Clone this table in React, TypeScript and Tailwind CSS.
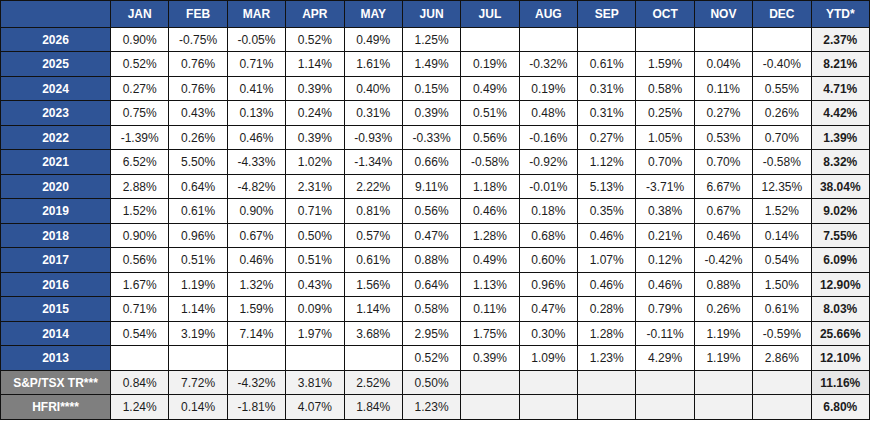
import React from 'react';

const months = ['JAN', 'FEB', 'MAR', 'APR', 'MAY', 'JUN', 'JUL', 'AUG', 'SEP', 'OCT', 'NOV', 'DEC'];

type Row = { label: string; values: (string | null)[]; ytd: string; bench?: boolean };

const rows: Row[] = [
  { label: '2026', values: ['0.90', '-0.75', '-0.05', '0.52', '0.49', '1.25', null, null, null, null, null, null], ytd: '2.37' },
  { label: '2025', values: ['0.52', '0.76', '0.71', '1.14', '1.61', '1.49', '0.19', '-0.32', '0.61', '1.59', '0.04', '-0.40'], ytd: '8.21' },
  { label: '2024', values: ['0.27', '0.76', '0.41', '0.39', '0.40', '0.15', '0.49', '0.19', '0.31', '0.58', '0.11', '0.55'], ytd: '4.71' },
  { label: '2023', values: ['0.75', '0.43', '0.13', '0.24', '0.31', '0.39', '0.51', '0.48', '0.31', '0.25', '0.27', '0.26'], ytd: '4.42' },
  { label: '2022', values: ['-1.39', '0.26', '0.46', '0.39', '-0.93', '-0.33', '0.56', '-0.16', '0.27', '1.05', '0.53', '0.70'], ytd: '1.39' },
  { label: '2021', values: ['6.52', '5.50', '-4.33', '1.02', '-1.34', '0.66', '-0.58', '-0.92', '1.12', '0.70', '0.70', '-0.58'], ytd: '8.32' },
  { label: '2020', values: ['2.88', '0.64', '-4.82', '2.31', '2.22', '9.11', '1.18', '-0.01', '5.13', '-3.71', '6.67', '12.35'], ytd: '38.04' },
  { label: '2019', values: ['1.52', '0.61', '0.90', '0.71', '0.81', '0.56', '0.46', '0.18', '0.35', '0.38', '0.67', '1.52'], ytd: '9.02' },
  { label: '2018', values: ['0.90', '0.96', '0.67', '0.50', '0.57', '0.47', '1.28', '0.68', '0.46', '0.21', '0.46', '0.14'], ytd: '7.55' },
  { label: '2017', values: ['0.56', '0.51', '0.46', '0.51', '0.61', '0.88', '0.49', '0.60', '1.07', '0.12', '-0.42', '0.54'], ytd: '6.09' },
  { label: '2016', values: ['1.67', '1.19', '1.32', '0.43', '1.56', '0.64', '1.13', '0.96', '0.46', '0.46', '0.88', '1.50'], ytd: '12.90' },
  { label: '2015', values: ['0.71', '1.14', '1.59', '0.09', '1.14', '0.58', '0.11', '0.47', '0.28', '0.79', '0.26', '0.61'], ytd: '8.03' },
  { label: '2014', values: ['0.54', '3.19', '7.14', '1.97', '3.68', '2.95', '1.75', '0.30', '1.28', '-0.11', '1.19', '-0.59'], ytd: '25.66' },
  { label: '2013', values: [null, null, null, null, null, '0.52', '0.39', '1.09', '1.23', '4.29', '1.19', '2.86'], ytd: '12.10' },
  { label: 'S&P/TSX TR***', values: ['0.84', '7.72', '-4.32', '3.81', '2.52', '0.50', null, null, null, null, null, null], ytd: '11.16', bench: true },
  { label: 'HFRI****', values: ['1.24', '0.14', '-1.81', '4.07', '1.84', '1.23', null, null, null, null, null, null], ytd: '6.80', bench: true },
];

const App = () => {
  return (
    <div className="w-[870px] h-[421px] bg-white" style={{ fontFamily: '"Liberation Sans", Arial, sans-serif' }}>
      <table className="w-[870px] table-fixed border-collapse text-[12px] leading-none">
        <colgroup>
          <col className="w-[110px]" />
          {months.map((m) => (
            <col key={m} />
          ))}
          <col />
        </colgroup>
        <thead>
          <tr className="h-[27px] bg-[#2f5496] text-white font-bold">
            <th className="border border-[#111]"></th>
            {months.map((m) => (
              <th key={m} className="border border-[#111] text-center">
                {m}
              </th>
            ))}
            <th className="border border-[#111] text-center">YTD*</th>
          </tr>
        </thead>
        <tbody>
          {rows.map((row, i) => (
            <tr key={row.label} className={i % 2 === 0 ? 'h-[24px]' : 'h-[25px]'}>
              <td
                className={`border border-[#111] text-center font-bold text-white ${
                  row.bench ? 'bg-[#7f7f7f]' : 'bg-[#2f5496]'
                }`}
              >
                {row.label}
              </td>
              {row.values.map((v, j) => (
                <td
                  key={j}
                  className={`border border-[#111] text-center text-[#1c1c1c] ${row.bench ? 'bg-[#f2f2f2]' : 'bg-white'}`}
                >
                  {v !== null ? `${v}%` : ''}
                </td>
              ))}
              <td
                className={`border border-[#111] text-center font-bold text-[#1c1c1c] ${
                  row.label.startsWith('S&P') ? 'bg-[#e7e7e7]' : 'bg-[#f2f2f2]'
                }`}
              >
                {row.ytd}%
              </td>
            </tr>
          ))}
        </tbody>
      </table>
    </div>
  );
};

export default App;
